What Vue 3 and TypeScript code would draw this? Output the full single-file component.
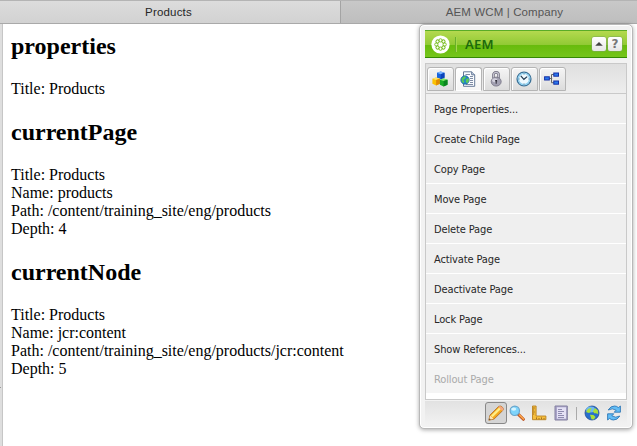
<script setup lang="ts">
import { ref } from 'vue'

interface Section { heading: string; lines: string[] }
interface MenuItem { label: string; disabled?: boolean }

const sections: Section[] = [
  { heading: 'properties', lines: ['Title: Products'] },
  {
    heading: 'currentPage',
    lines: ['Title: Products', 'Name: products', 'Path: /content/training_site/eng/products', 'Depth: 4'],
  },
  {
    heading: 'currentNode',
    lines: ['Title: Products', 'Name: jcr:content', 'Path: /content/training_site/eng/products/jcr:content', 'Depth: 5'],
  },
]

const menu: MenuItem[] = [
  { label: 'Page Properties...' },
  { label: 'Create Child Page' },
  { label: 'Copy Page' },
  { label: 'Move Page' },
  { label: 'Delete Page' },
  { label: 'Activate Page' },
  { label: 'Deactivate Page' },
  { label: 'Lock Page' },
  { label: 'Show References...' },
  { label: 'Rollout Page', disabled: true },
]

const activeTab = ref(1)
</script>

<template>
  <div class="window">
    <header class="browser-tabs">
      <div class="browser-tab current">Products</div>
      <div class="browser-tab">AEM WCM | Company</div>
    </header>

    <div class="body">
      <div class="gutter"><span class="handle"></span></div>
      <main class="content">
        <section v-for="s in sections" :key="s.heading">
          <h2>{{ s.heading }}</h2>
          <p v-for="line in s.lines" :key="line">{{ line }}</p>
        </section>
      </main>
    </div>

    <aside class="sidekick">
      <div class="titlebar">
        <svg class="logo" viewBox="0 0 20 20">
          <circle cx="10" cy="10" r="9.6" fill="#fff" />
          <g fill="none" stroke="#79bd22" stroke-width="1">
            <circle v-for="a in 8" :key="a" cx="10" cy="5.6" r="1.7" :transform="`rotate(${a * 45} 10 10)`" />
          </g>
        </svg>
        <span class="rule"></span>
        <span class="name">AEM</span>
        <button class="tool" aria-label="Collapse">
          <svg viewBox="0 0 14 14"><path d="M3.2 8.8 7 5l3.8 3.8z" fill="#444" /></svg>
        </button>
        <button class="tool">?</button>
      </div>

      <div class="panel">
        <nav class="tabs">
          <button :class="['tab', { active: activeTab === 0 }]" @click="activeTab = 0">
            <svg viewBox="0 0 16 16">
              <path d="M5 1.7 8.7.6l3.8 1.1v5L8.7 8.2 5 6.7z" fill="#1765df" />
              <path d="M5 1.7 8.7.6l3.8 1.1-3.8 1.5z" fill="#7ab5ff" />
              <path d="m8.7 3.2 3.8-1.5v5L8.7 8.2z" fill="#0a43b8" />
              <path d="m.4 7.7 3.7-1.3 3.8 1.3v5.1l-3.8 1.7-3.7-1.7z" fill="#fbc100" />
              <path d="m.4 7.7 3.7-1.3 3.8 1.3-3.8 1.4z" fill="#ffe36b" />
              <path d="m4.1 9.1 3.8-1.4v5.1l-3.8 1.7z" fill="#e08a00" />
              <path d="m7.9 8.7 3.7-1.3 3.9 1.3v5l-3.9 1.8-3.7-1.8z" fill="#19ad25" />
              <path d="m7.9 8.7 3.7-1.3 3.9 1.3-3.9 1.4z" fill="#82e66b" />
              <path d="m11.6 10.1 3.9-1.4v5l-3.9 1.8z" fill="#0a8420" />
            </svg>
          </button>
          <button :class="['tab', { active: activeTab === 1 }]" @click="activeTab = 1">
            <svg viewBox="0 0 16 16">
              <path d="M3.5.8h8.2l3 3v11.5H3.5z" fill="#fafcff" stroke="#667997" />
              <path d="M11.7.8v3h3" fill="#c4d2e5" stroke="#667997" />
              <path d="M5.5 3.5H10M10 5.5h3M10 7.5h3M10 9.5h3M10 11.5h3M6 13.5h7" stroke="#7f8ca4" />
              <circle cx="5" cy="9" r="4.2" fill="#2387c7" stroke="#155b98" stroke-width=".7" />
              <path d="M1.6 7.4 4 5.3l2 .5-.9 1.9L3.3 9l1 1.7-1 1.6-1.6-2zM6.3 8l2.5-.8.1 2.7-1.8 2.5-1.4-2z" fill="#5bcb55" />
            </svg>
          </button>
          <button :class="['tab', { active: activeTab === 2 }]" @click="activeTab = 2">
            <svg viewBox="0 0 16 16">
              <path d="M5.4 7V4a2.6 2.6 0 0 1 5.2 0v3.5" fill="none" stroke="#6f6d7d" stroke-width="2.6" />
              <path d="M5.4 7V4a2.6 2.6 0 0 1 5.2 0v3.5" fill="none" stroke="#c4c2d0" stroke-width="1.2" />
              <ellipse cx="8.2" cy="10.6" rx="5" ry="4.5" fill="#a3a1b2" stroke="#747182" stroke-width=".8" />
              <ellipse cx="6.8" cy="9.3" rx="2.7" ry="2" fill="#d3d1dd" />
              <path d="M7.2 9h2v1.5h-.5v2.3h-1v-2.3h-.5z" fill="#302e3a" />
            </svg>
          </button>
          <button :class="['tab', { active: activeTab === 3 }]" @click="activeTab = 3">
            <svg viewBox="0 0 16 16">
              <circle cx="8" cy="8" r="6.9" fill="#effaff" stroke="#3c7298" stroke-width="1.4" />
              <circle cx="8" cy="8" r="5.6" fill="none" stroke="#8fd0f0" stroke-width="1.4" />
              <path d="m4.8 4.8 3.1 3.5 3.3-2.7" fill="none" stroke="#223950" stroke-width="1.2" />
              <path d="M8 2.5v1M8 12.5v1M2.5 8h1M12.5 8h1" stroke="#557791" />
            </svg>
          </button>
          <button :class="['tab', { active: activeTab === 4 }]" @click="activeTab = 4">
            <svg viewBox="0 0 16 16">
              <path d="M5 7.5h3.2M10 3.5H7.5v8.2H10" fill="none" stroke="#666" />
              <g fill="#2a78ed" stroke="#152fa5">
                <rect x=".6" y="5.8" width="4.7" height="3.2" />
                <rect x="9.8" y="2" width="4.7" height="3.2" />
                <rect x="9.8" y="10" width="4.7" height="3.2" />
              </g>
            </svg>
          </button>
        </nav>
        <ul class="menu">
          <li v-for="item in menu" :key="item.label" :class="{ disabled: item.disabled }">{{ item.label }}</li>
        </ul>
      </div>

      <footer class="modes">
        <button class="mode pressed" aria-label="Edit">
          <svg viewBox="0 0 16 16">
            <path d="m.8 15.2 1.2-5.1L10.8 1.3q2-.9 3.8 1.1 1.4 1.8.2 3.1L6.1 14z" fill="#f4a81d" stroke="#a9651c" stroke-width=".8" />
            <path d="m3 10.4 8.2-8 1.8 1.7-8.4 8.1z" fill="#ffee87" />
            <path d="m10.4 2 3.8 3.9 1-1c.8-1.7-2.1-4.1-3.8-3.7z" fill="#f5a886" />
            <path d="m2.2 10.5 3.3 3.2-4.5 1.2z" fill="#ffe6b4" />
            <path d="m1.5 13.2 1.3 1.3-1.8.5z" fill="#443322" />
          </svg>
        </button>
        <button class="mode" aria-label="Preview">
          <svg viewBox="0 0 16 16">
            <path d="m9.4 9.4 5 4.9" stroke="#bd5426" stroke-width="3" stroke-linecap="round" />
            <path d="m10.5 10 4 4" stroke="#ffac4b" stroke-width="1.5" stroke-linecap="round" />
            <circle cx="5.8" cy="5.8" r="4.7" fill="#7ed4fb" stroke="#6aa6cc" stroke-width="1.2" />
            <ellipse cx="4.7" cy="4.1" rx="2.5" ry="1.6" fill="#d6f4ff" />
          </svg>
        </button>
        <button class="mode" aria-label="Design">
          <svg viewBox="0 0 16 16">
            <path d="M1.5 1h3.6v10h9.8v3.7H1.5z" fill="#f6bf3d" stroke="#b98122" stroke-width=".9" />
            <path d="M2 3h1.8M2 5h1.2M2 7h1.8M2 9h1.2M5.5 14.2v-1.8M8 14.2V13M10.5 14.2v-1.8M13 14.2V13" stroke="#8d5c18" stroke-width=".8" />
          </svg>
        </button>
        <button class="mode" aria-label="Scaffolding">
          <svg viewBox="0 0 16 16">
            <path d="M2 1h12.3v14H2z" fill="#aaa5c9" stroke="#8380a0" />
            <path d="M4 2.3h9v11.4H4z" fill="#e4e1f5" />
            <path d="M5 4.5h4M5 6.5h6M5 8.5h4M5 10.5h6M5 12.5h6" stroke="#8581a8" stroke-width=".9" />
          </svg>
        </button>
        <span class="divider"></span>
        <button class="mode" aria-label="Websites">
          <svg viewBox="0 0 16 16">
            <circle cx="8" cy="8" r="7" fill="#286fcd" stroke="#234c94" stroke-width=".8" />
            <ellipse cx="6.5" cy="4.5" rx="4.5" ry="3" fill="#7cc4f5" opacity=".85" />
            <path d="M2 7 4 3.9l2.6-1 1.1.9-1.3 1.3.2 1.4L5.2 8 4 7.7zM8.8 6.5 11 2.9l2.8 2.4.4 3.6-2.3-.6-1.5-.1zM6 9.8l3.4.3 2.1 2-1.7 2.4-2.3-.3z" fill="#a9df3a" />
          </svg>
        </button>
        <button class="mode" aria-label="Refresh">
          <svg viewBox="0 0 16 16">
            <g fill="#62bdf6" stroke="#1f6cae" stroke-width=".8" stroke-linejoin="round">
              <path d="M2.2 5Q4.6.9 8.6 1q2.3.1 3.8 1.6L14.4 1v6.2H8.2l2-2Q6.4 2.6 2.2 5z" />
              <path d="M13.8 11q-2.4 4.1-6.4 4-2.3-.1-3.8-1.6L1.6 15V8.8h6.2l-2 2q3.8 2.6 8 .2z" />
            </g>
          </svg>
        </button>
      </footer>
    </aside>
  </div>
</template>

<style>
body { margin: 0; overflow: hidden; }
</style>

<style scoped>
.window { position: relative; width: 637px; height: 446px; box-sizing: border-box; overflow: hidden; display: flex; flex-direction: column; background: #fff; color: #000; }
button { padding: 0; margin: 0; border: 0; background: none; }
svg { display: block; }

.browser-tabs { display: grid; grid-template-columns: 340px 1fr; flex: none; height: 24px; box-sizing: border-box; border-top: 1px solid #b4b4b4; border-bottom: 1px solid #a9a9a9; }
.browser-tab { padding-left: 31px; font: 11.5px/22px "Liberation Sans", Arial, sans-serif; letter-spacing: .12px; text-align: center; color: #555; background: linear-gradient(#c8c8c8, #bebebe); border-left: 1px solid #a4a4a4; }
.browser-tab.current { color: #262626; background: linear-gradient(#dcdcdc, #d2d2d2); border-left: 0; padding: 0 3px 0 0; letter-spacing: .18px; }

.body { flex: 1; display: flex; min-height: 0; }
.gutter { width: 2px; background: #dedede; border-right: 1px solid #c6c6c6; display: flex; flex-direction: column; justify-content: flex-end; padding-bottom: 58px; height: 364px; }
.handle { height: 1px; width: 1px; background: #999; }
.content { padding: 8px; font: 16px/18px "Liberation Serif", "Times New Roman", serif; }
h2 { margin: 0 0 20px; font-size: 24px; line-height: 28px; }
section + section { margin-top: 20px; }
p { margin: 0; }

.sidekick { position: absolute; left: 419px; top: 24px; width: 214px; height: 405px; box-sizing: border-box; padding: 5px 5px 4px; border: 1px solid #b8b8b8; border-radius: 5px; background: #f2f2f2; box-shadow: inset 0 0 0 1px #fff, 0 1px 4px rgba(0, 0, 0, .34); display: flex; flex-direction: column; font-family: "DejaVu Sans Condensed", "DejaVu Sans", sans-serif; }
.titlebar { flex: none; height: 28px; box-sizing: border-box; display: flex; align-items: center; padding: 0 5px 0 6px; border-top: 1px solid #5aac27; border-bottom: 1px solid #348904; background: linear-gradient(#b4d94f 0, #91ca35 52%, #67bb0c 54%, #75c51b 100%); }
.logo { width: 19px; height: 19px; }
.rule { width: 1px; height: 15px; margin: 0 8px 0 5px; background: #6aae2c; border-right: 1px solid #a5d84d; }
.name { flex: 1; font: 600 13px/16px "Noto Sans", sans-serif; letter-spacing: .2px; color: #1c6a0c; }
.tool { width: 14px; height: 14px; margin-left: 2px; border-radius: 2px; background: linear-gradient(#fff, #e6e6e6); box-shadow: 0 0 0 .5px #7da55c; font: bold 12px/14px "DejaVu Sans", sans-serif; color: #777; }

.panel { flex: none; margin-top: 5px; height: 337px; box-sizing: border-box; border: 1px solid #c9c9c9; background: #fff; }
.tabs { height: 30px; box-sizing: border-box; display: flex; gap: 1px; padding: 3px 1px 2px; background: linear-gradient(#dfdfdf, #eee); border-bottom: 1px solid #c9c9c9; }
.tab { width: 27px; height: 24px; box-sizing: border-box; display: grid; place-items: center; border: 1px solid #b5b5b5; border-radius: 3px 3px 0 0; background: linear-gradient(#f5f5f5, #dcdcdc); box-shadow: inset 1px 1px #fff; }
.tab.active { border-bottom-color: #fff; background: linear-gradient(#fff, #f5f5f5); }
.tab svg, .mode svg { width: 16px; height: 16px; }
.tab svg { margin-right: 2px; }
.menu { list-style: none; margin: 0; padding: 0; }
.menu li { height: 30px; box-sizing: border-box; padding: 1px 0 0 8px; border-bottom: 1px solid #fff; background: #efefef; color: #272727; font-size: 11px; line-height: 29px; letter-spacing: -.13px; }
.menu .disabled { background: #f4f4f4; color: #aaa; }

.modes { flex: none; height: 24px; margin-top: 1px; display: flex; align-items: center; justify-content: flex-end; padding-right: 2px; background: linear-gradient(#e2e2e2, #f2f2f2); }
.mode { width: 22px; height: 22px; box-sizing: border-box; display: grid; place-items: center; border: 1px solid transparent; border-radius: 3px; }
.mode.pressed { margin-right: -1px; border-color: #888; background: #d5d5d5; }
.divider { width: 1px; height: 13px; margin: 0 4px; background: #aaa; }
</style>
